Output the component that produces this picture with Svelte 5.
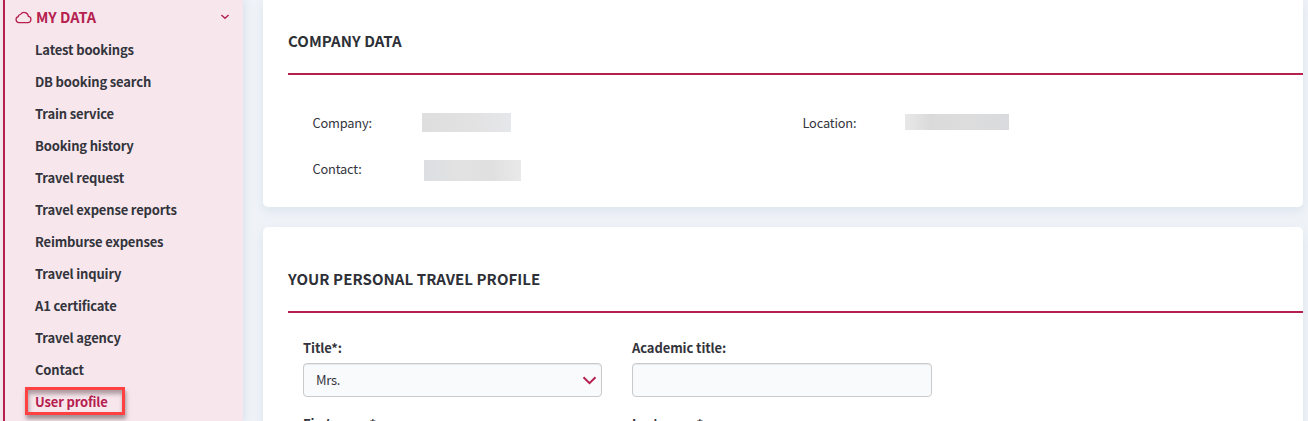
<script>
  const links = [
    'Latest bookings', 'DB booking search', 'Train service', 'Booking history',
    'Travel request', 'Travel expense reports', 'Reimburse expenses', 'Travel inquiry',
    'A1 certificate', 'Travel agency', 'Contact', 'User profile'
  ];
</script>

<div class="page">
  <nav class="sidebar">
    <div class="group">
      <svg class="cloud" width="17" height="13" viewBox="0 0 17 13" fill="none" stroke="#b5204f" stroke-width="1.25">
        <path d="M3.9 11.6h9a3.1 3.1 0 0 0 .5-6.15A4.3 4.3 0 0 0 5.5 3.5 2.3 2.3 0 0 0 3.3 5.7 3 3 0 0 0 3.9 11.6Z" />
      </svg>
      <span class="group-name">MY DATA</span>
      <svg class="chevron" width="10" height="6" viewBox="0 0 10 6" fill="none" stroke="#b5204f" stroke-width="1.4">
        <path d="M1.4 1 5 4.3 8.6 1" />
      </svg>
    </div>
    <ul>
      {#each links as link}
        <li class:active={link === 'User profile'}><span>{link}</span></li>
      {/each}
    </ul>
  </nav>

  <main>
    <section class="card company">
      <h2>COMPANY DATA</h2>
      <div class="facts">
        <span>Company:</span><i class="mask one"></i>
        <span>Location:</span><i class="mask two"></i>
        <span>Contact:</span><i class="mask three"></i>
      </div>
    </section>

    <section class="card profile">
      <h2>YOUR PERSONAL TRAVEL PROFILE</h2>
      <div class="fields">
        <div class="field">
          <div class="label">Title*:</div>
          <div class="box">
            <span>Mrs.</span>
            <svg width="15" height="10" viewBox="0 0 15 10" fill="none" stroke="#b5204f" stroke-width="2">
              <path d="M1.5 2.3 7.5 8.1 13.5 2.3" />
            </svg>
          </div>
        </div>
        <div class="field">
          <div class="label">Academic title:</div>
          <div class="box"></div>
        </div>
        <div class="field"><div class="label">First name*:</div></div>
        <div class="field"><div class="label">Last name*:</div></div>
      </div>
    </section>
  </main>
</div>

<style>
  .page {
    display: flex;
    width: 1308px;
    height: 421px;
    overflow: hidden;
    background: #eff3f8;
    color: #33343c;
    font: 13px/20px "Noto Sans CJK SC", "Noto Sans", sans-serif;
  }
  .sidebar {
    box-sizing: border-box;
    width: 240px;
    height: 421px;
    margin: 0 20px 0 3px;
    flex: none;
    border-left: 2px solid #b5204f;
    background: #f7e7ec;
    box-shadow: 2px 0 7px rgba(193, 207, 221, 0.45), -3px 0 0 #f7e7ec;
  }
  .group {
    display: flex;
    align-items: center;
    height: 34px;
    padding: 0 13px 0 10px;
    color: #b5204f;
    font-size: 14.5px;
    font-weight: 700;
  }
  .cloud { margin-right: 4px; }
  .group-name { flex: 1; }
  ul {
    margin: 0;
    padding: 0 0 0 30px;
    list-style: none;
  }
  li {
    height: 32px;
    line-height: 32px;
    font-weight: 700;
    letter-spacing: -0.16px;
    white-space: nowrap;
  }
  .active {
    padding-top: 1px;
    color: #b5204f;
  }
  .active span {
    display: block;
    box-sizing: border-box;
    width: 100px;
    height: 28px;
    margin-left: -10px;
    padding-left: 7px;
    border: 3px solid #ff4141;
    line-height: 24px;
    box-shadow: 1px 4px 4px rgba(80, 60, 65, 0.5), inset 1px 4px 4px rgba(80, 60, 65, 0.45);
  }
  main {
    flex: none;
    width: 1040px;
  }
  .card {
    box-sizing: border-box;
    padding-left: 25px;
    background: #fff;
    box-shadow: 0 4px 10px rgba(193, 207, 221, 0.4);
  }
  .company {
    height: 207px;
    margin-bottom: 20px;
    padding-top: 23px;
    border-radius: 0 0 5px 5px;
  }
  .profile {
    height: 240px;
    padding-top: 34px;
    border-radius: 5px 5px 0 0;
  }
  h2 {
    box-sizing: border-box;
    height: 52px;
    margin: 0;
    border-bottom: 2px solid #b5204f;
    font-size: 15px;
    line-height: 35px;
    font-weight: 700;
    letter-spacing: 0.06px;
    color: #2e3037;
  }
  .facts {
    display: grid;
    grid-template-columns: 109px 381px 103px 120px;
    grid-auto-rows: 46px;
    padding: 38px 0 0 25px;
  }
  .facts span {
    margin-left: -0.5px;
    font-size: 12.8px;
    letter-spacing: -0.17px;
  }
  .mask { display: block; }
  .one {
    width: 89px;
    height: 19px;
    background: linear-gradient(90deg, #dedede, #e2e2e3 60%, #e6e7ea);
  }
  .two {
    width: 104px;
    height: 16px;
    margin: 1px 0 0 -1px;
    background: linear-gradient(90deg, #e8e8e8, #dadada 25%, #dddddd 60%, #d8dadd);
  }
  .three {
    width: 97px;
    height: 21px;
    margin: 1px 0 0 2px;
    background: linear-gradient(90deg, #dcdee2, #e2e2e2 35%, #e0e0e0 70%, #e9e9e9);
  }
  .fields {
    display: grid;
    grid-template-columns: 299px 300px;
    column-gap: 30px;
    row-gap: 17px;
    padding: 25px 0 0 15px;
  }
  .label {
    height: 25px;
    line-height: 20px;
    font-weight: 700;
    letter-spacing: -0.1px;
  }
  .box {
    box-sizing: border-box;
    display: flex;
    align-items: center;
    justify-content: space-between;
    height: 34px;
    padding: 0 4px 0 12px;
    border: 1px solid #c9cacb;
    border-radius: 4px;
    background: #f9fafc;
    letter-spacing: -0.3px;
    box-shadow: inset 0 1px 1px rgba(0, 0, 0, 0.075);
  }
</style>
